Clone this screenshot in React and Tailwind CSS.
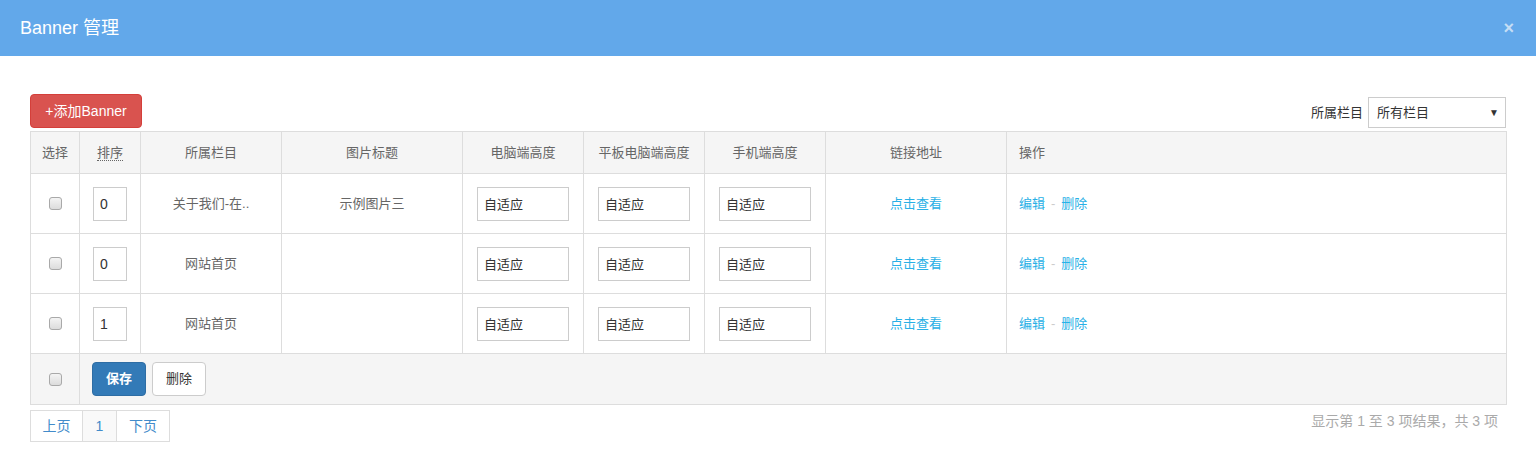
import { useState } from 'react';

const ROWS = [
    { id: 1, order: '0', column: '关于我们-在..', title: '示例图片三' },
    { id: 2, order: '0', column: '网站首页', title: '' },
    { id: 3, order: '1', column: '网站首页', title: '' },
];

const Checkbox = () => (
    <span className="inline-block w-[13px] h-[13px] rounded-[3px] border border-[#a9a9a9] bg-gradient-to-b from-[#f4f4f4] to-[#dcdcdc]" />
);

const HeightInput = () => (
    <input
        readOnly
        value="自适应"
        className="w-[92px] h-[34px] border border-[#ccc] px-[6px] text-[13px] text-[#333] bg-white outline-none"
    />
);

const App = () => {
    const [rows] = useState(ROWS);

    return (
        <div className="w-[1536px] h-[456px] bg-white text-[13px] text-[#666]" style={{ fontFamily: '"Liberation Sans", "Noto Sans CJK SC", sans-serif' }}>

            {/* Header */}
            <div className="h-[56px] bg-[#62a8ea] flex items-center justify-between pl-[20px] pr-[22px]">
                <h2 className="text-[18px] text-white">Banner 管理</h2>
                <span className="text-[#c5def5] text-[18px] font-bold leading-none">×</span>
            </div>

            <div className="px-[30px] pt-[38px]">

                {/* Toolbar */}
                <div className="flex justify-between items-end mb-[3px]">
                    <button className="h-[34px] w-[112px] bg-[#d9534f] border border-[#d43f3a] rounded-[4px] text-white text-[14px]">+添加Banner</button>
                    <div className="flex items-center gap-[5px]">
                        <span className="text-[13px] text-[#333]">所属栏目</span>
                        <div className="w-[138px] h-[31px] border border-[#ccc] flex items-center justify-between pl-[8px] pr-[6px] text-[#333]">
                            <span>所有栏目</span>
                            <span className="text-[10px] text-[#333]">▼</span>
                        </div>
                    </div>
                </div>

                {/* Table */}
                <table className="w-[1476px] border-collapse table-fixed">
                    <colgroup>
                        <col className="w-[49px]" />
                        <col className="w-[61px]" />
                        <col className="w-[141px]" />
                        <col className="w-[181px]" />
                        <col className="w-[121px]" />
                        <col className="w-[121px]" />
                        <col className="w-[121px]" />
                        <col className="w-[181px]" />
                        <col className="w-[500px]" />
                    </colgroup>
                    <thead>
                        <tr className="h-[42px] bg-[#f5f5f5]">
                            <th className="border border-[#ddd] font-normal">选择</th>
                            <th className="border border-[#ddd] font-normal">
                                <span className="border-b border-dotted border-[#666]">排序</span>
                            </th>
                            <th className="border border-[#ddd] font-normal">所属栏目</th>
                            <th className="border border-[#ddd] font-normal">图片标题</th>
                            <th className="border border-[#ddd] font-normal">电脑端高度</th>
                            <th className="border border-[#ddd] font-normal">平板电脑端高度</th>
                            <th className="border border-[#ddd] font-normal">手机端高度</th>
                            <th className="border border-[#ddd] font-normal">链接地址</th>
                            <th className="border border-[#ddd] font-normal text-left pl-[12px]">操作</th>
                        </tr>
                    </thead>
                    <tbody>
                        {rows.map((row) => (
                            <tr key={row.id} className="h-[60px]">
                                <td className="border border-[#ddd] text-center align-middle"><div className="flex justify-center"><Checkbox /></div></td>
                                <td className="border border-[#ddd] text-center">
                                    <input readOnly value={row.order} className="w-[34px] h-[34px] border border-[#ccc] px-[6px] text-[14px] text-[#333] outline-none" />
                                </td>
                                <td className="border border-[#ddd] text-center">{row.column}</td>
                                <td className="border border-[#ddd] text-center">{row.title}</td>
                                <td className="border border-[#ddd] text-center"><HeightInput /></td>
                                <td className="border border-[#ddd] text-center"><HeightInput /></td>
                                <td className="border border-[#ddd] text-center"><HeightInput /></td>
                                <td className="border border-[#ddd] text-center text-[#28b0e6]">点击查看</td>
                                <td className="border border-[#ddd] pl-[12px]">
                                    <span className="text-[#28b0e6]">编辑</span>
                                    <span className="text-[#ccc] mx-[6px]">-</span>
                                    <span className="text-[#28b0e6]">删除</span>
                                </td>
                            </tr>
                        ))}
                        <tr className="h-[51px] bg-[#f5f5f5]">
                            <td className="border border-[#ddd]"><div className="flex justify-center"><Checkbox /></div></td>
                            <td colSpan={8} className="border border-[#ddd] pl-[12px]">
                                <div className="flex gap-[6px]">
                                    <button className="h-[34px] w-[54px] bg-[#337ab7] border border-[#2e6da4] rounded-[4px] text-white font-bold">保存</button>
                                    <button className="h-[34px] w-[54px] bg-white border border-[#ccc] rounded-[4px] text-[#333]">删除</button>
                                </div>
                            </td>
                        </tr>
                    </tbody>
                </table>

                {/* Footer */}
                <div className="flex justify-between items-center mt-[5px]">
                    <div className="flex h-[32px] text-[#428bca] text-[14px]">
                        <span className="w-[53px] border border-[#ddd] flex items-center justify-center">上页</span>
                        <span className="w-[33px] border-y border-[#ddd] bg-[#f9f9f9] flex items-center justify-center">1</span>
                        <span className="w-[54px] border border-[#ddd] flex items-center justify-center">下页</span>
                    </div>
                    <span className="text-[#aaa] text-[14px] pr-[8px] -mt-[10px]">显示第 1 至 3 项结果，共 3 项</span>
                </div>
            </div>
        </div>
    );
};

export default App;
